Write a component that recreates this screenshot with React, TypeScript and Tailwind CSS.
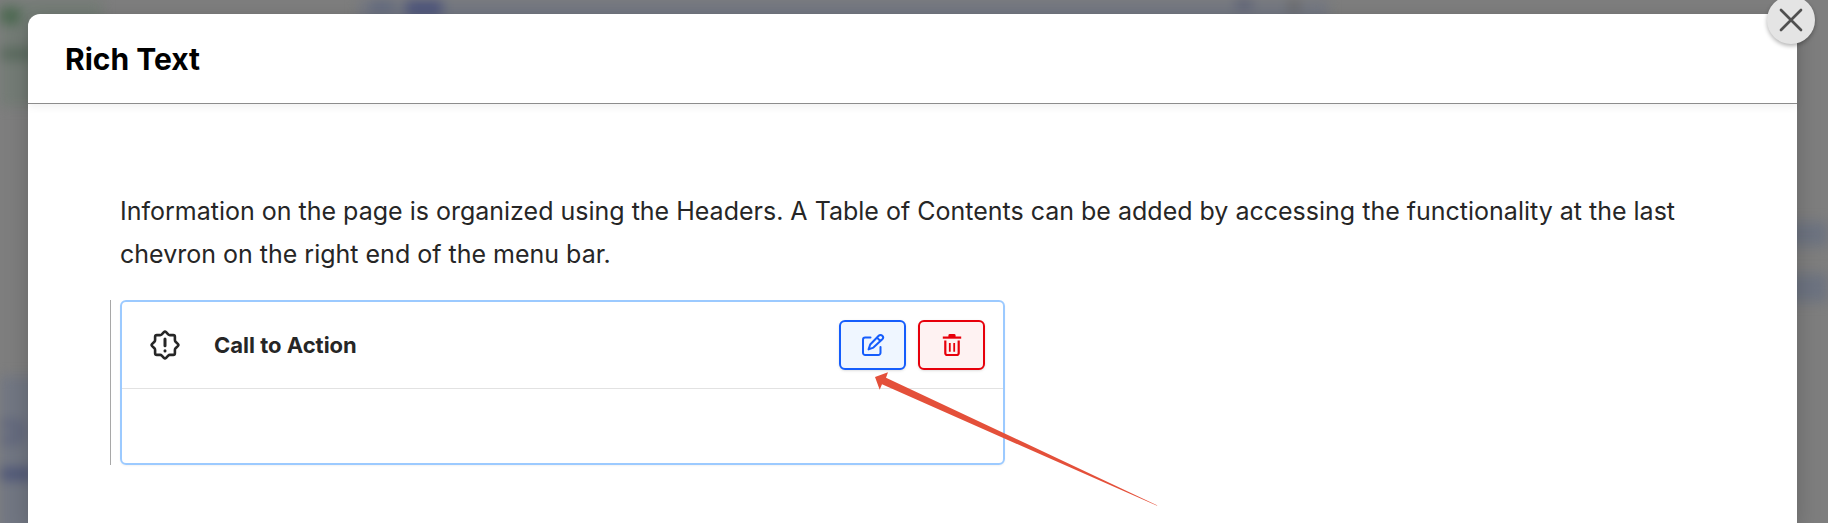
import { useId } from "react";

function Backdrop() {
  return (
    <div aria-hidden="true" className="absolute inset-0 overflow-hidden bg-[#7e7e7e]">
      <div className="flex h-full items-start justify-between blur-[6px]">
        <div className="flex w-[102px] flex-col gap-[270px]">
          <div className="flex h-[106px] flex-col items-start bg-[#747c76] pt-2">
            <span className="h-4 w-5 bg-[#4b6850]" />
            <span className="mt-6 h-3 w-8 bg-[#596a5d]" />
          </div>
          <div className="flex h-48 flex-col items-start bg-[#727783] pt-11">
            <span className="h-6 w-6 rounded-r-lg border-8 border-l-0 border-[#5f657c]" />
            <span className="mt-6 h-3 w-8 bg-[#4e5678]" />
          </div>
        </div>
        <div className="ml-64 mr-auto flex h-8 w-[970px] items-start bg-[#747882] pl-3">
          <span className="h-3 w-6 bg-[#626a80]" />
          <span className="ml-3 h-4 w-9 bg-[#4c547c]" />
          <span className="ml-auto mr-9 h-2 w-4 bg-[#565b74]" />
          <span className="mr-7 h-3 w-3 bg-[#68696b]" />
        </div>
        <div className="flex w-11 flex-col gap-7 pt-[222px]">
          <span className="h-6 bg-[#6d7380]" />
          <span className="h-7 bg-[#6d7380]" />
        </div>
      </div>
    </div>
  );
}

function SealWarningIcon() {
  return (
    <svg viewBox="0 0 30 30" className="size-[30px] shrink-0" fill="none" stroke="currentColor" strokeWidth="2.6" strokeLinejoin="round" strokeLinecap="round" aria-hidden="true">
      <path d="M13.9 2.2Q15 1.1 16.1 2.2L18.2 4.4Q18.9 5.1 19.9 5.1H23.3Q24.9 5.1 24.9 6.7V10.1Q24.9 11.1 25.6 11.8L27.8 13.9Q28.9 15 27.8 16.1L25.6 18.2Q24.9 18.9 24.9 19.9V23.3Q24.9 24.9 23.3 24.9H19.9Q18.9 24.9 18.2 25.6L16.1 27.8Q15 28.9 13.9 27.8L11.8 25.6Q11.1 24.9 10.1 24.9H6.7Q5.1 24.9 5.1 23.3V19.9Q5.1 18.9 4.4 18.2L2.2 16.1Q1.1 15 2.2 13.9L4.4 11.8Q5.1 11.1 5.1 10.1V6.7Q5.1 5.1 6.7 5.1H10.1Q11.1 5.1 11.8 4.4Z" />
      <path d="M15 9V15.8M15 20.8V21" strokeWidth="3" />
    </svg>
  );
}

function EditIcon() {
  return (
    <svg viewBox="0 0 24 24" className="size-6" fill="none" stroke="currentColor" strokeWidth="2" strokeLinejoin="round" strokeLinecap="round" aria-hidden="true">
      <path d="M9.5 4.5H4.2A2.2 2.2 0 0 0 2 6.7V19.8A2.2 2.2 0 0 0 4.2 22H17.3A2.2 2.2 0 0 0 19.5 19.8V14" />
      <path d="M17.7 2.7A2.5 2.5 0 0 1 21.3 6.3L12.4 14.6 7.6 16.4 9.2 11.5ZM16 4.6 19.4 8" />
    </svg>
  );
}

function TrashIcon() {
  return (
    <svg viewBox="0 0 24 24" className="size-6" fill="none" stroke="currentColor" strokeWidth="2" aria-hidden="true">
      <path d="M8.4 4V2.4Q8.4 1 9.8 1H14.2Q15.6 1 15.6 2.4V4Z" fill="currentColor" stroke="none" />
      <path d="M2.8 4.6H21.2" strokeWidth="2.2" />
      <path d="M5.3 7.4V20.2A1.8 1.8 0 0 0 7.1 22H16.9A1.8 1.8 0 0 0 18.7 20.2V7.4" strokeWidth="2.2" />
      <path d="M9.8 10V18.8M14.2 10V18.8" strokeWidth="1.8" />
    </svg>
  );
}

function Arrow() {
  return (
    <svg viewBox="0 0 285 136" width="285" height="136" className="pointer-events-none absolute left-9 top-13 z-10 max-w-none" aria-hidden="true">
      <path fill="#e4503a" d="M0 5 13 .3 11 5.7 282.5 133.4 281.5 133.6 7 12.3 4.7 17.7Z" />
    </svg>
  );
}

export default function App() {
  const titleId = useId();
  return (
    <div className="relative flex min-h-screen overflow-hidden font-['Inter',sans-serif]">
      <Backdrop />
      <main role="dialog" aria-labelledby={titleId} className="relative ml-7 mr-[31px] mt-3.5 flex-1 rounded-t-xl bg-white shadow-[0_8px_24px_rgba(0,0,0,0.2)]">
        <button type="button" aria-label="Close" className="absolute -right-[18px] -top-[18px] z-10 flex size-12 items-center justify-center rounded-full bg-[#e4e4e4] shadow-[0_2px_4px_rgba(0,0,0,0.3)]">
          <svg viewBox="0 0 24 24" className="size-6" stroke="#505050" strokeWidth="2.7" strokeLinecap="round" aria-hidden="true">
            <path d="M2 2 22 22M22 2 2 22" />
          </svg>
        </button>
        <header className="flex h-[90px] items-center border-b border-[#8c8c8c] px-[37px] shadow-[0_3px_8px_rgba(0,0,0,0.06)]">
          <h1 id={titleId} className="text-[30px] font-bold leading-9 text-black">Rich Text</h1>
        </header>
        <div className="px-[92px] pb-14 pt-[86px] text-[#262626]">
          <p className="text-[25px] leading-[43px]">
            Information on the page is organized using the Headers. A Table of Contents can be added by accessing the functionality at the last chevron on the right end of the menu bar.
          </p>
          <div className="-ml-[10px] mt-6 max-w-[895px] border-l border-[#a8a8a8] pl-[9px]">
            <section className="rounded-md border-2 border-[#9ccaff] shadow-xs">
              <div className="flex h-[87px] items-center border-b border-[#e2e2e2] pl-7 pr-[18px]">
                <SealWarningIcon />
                <h2 className="ml-[34px] flex-1 text-[22px] font-bold">Call to Action</h2>
                <div className="relative flex gap-3">
                  <button type="button" aria-label="Edit" className="flex h-[50px] w-[67px] items-center justify-center rounded-md border-2 border-[#155dfc] bg-[#eff6ff] text-[#155dfc] shadow-sm">
                    <EditIcon />
                  </button>
                  <button type="button" aria-label="Delete" className="flex h-[50px] w-[67px] items-center justify-center rounded-md border-2 border-[#e7000b] bg-[#fef2f2] text-[#e7000b] shadow-sm">
                    <TrashIcon />
                  </button>
                  <Arrow />
                </div>
              </div>
              <div className="h-[74px]" />
            </section>
          </div>
        </div>
      </main>
    </div>
  );
}
